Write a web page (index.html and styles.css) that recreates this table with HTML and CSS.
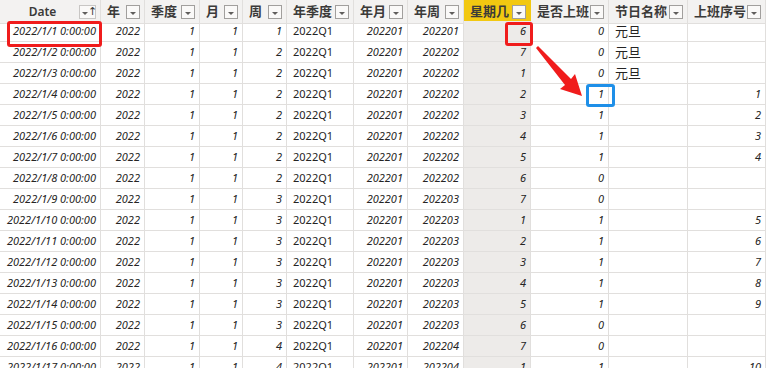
FILE: index.html
```html
<!DOCTYPE html>
<html lang="zh">
<head>
<meta charset="utf-8">
<link rel="stylesheet" href="styles.css">
</head>
<body>
<div class="view">
  <div class="grid" id="grid">
    <div class="hc hc-center"><span class="ht">Date</span><span class="btn sort"><span class="tri"></span><span class="up">↑</span></span></div>
    <div class="hc"><span class="ht">年</span><span class="btn"><span class="tri"></span></span></div>
    <div class="hc"><span class="ht">季度</span><span class="btn"><span class="tri"></span></span></div>
    <div class="hc"><span class="ht">月</span><span class="btn"><span class="tri"></span></span></div>
    <div class="hc"><span class="ht">周</span><span class="btn"><span class="tri"></span></span></div>
    <div class="hc"><span class="ht">年季度</span><span class="btn"><span class="tri"></span></span></div>
    <div class="hc"><span class="ht">年月</span><span class="btn"><span class="tri"></span></span></div>
    <div class="hc"><span class="ht">年周</span><span class="btn"><span class="tri"></span></span></div>
    <div class="hc hc-sel"><span class="ht">星期几</span><span class="btn"><span class="tri"></span></span></div>
    <div class="hc"><span class="ht">是否上班</span><span class="btn"><span class="tri"></span></span></div>
    <div class="hc"><span class="ht">节日名称</span><span class="btn"><span class="tri"></span></span></div>
    <div class="hc"><span class="ht">上班序号</span><span class="btn"><span class="tri"></span></span></div>
  </div>
  <div class="marks">
    <div class="box red-a"></div>
    <div class="box red-b"></div>
    <div class="box blue"></div>
    <svg class="arrow" width="70" height="60" viewBox="0 0 70 60">
      <polygon points="2,3 4,1 37,34 41,29 48,51 26,44 31,40" fill="#f01c1c"/>
    </svg>
  </div>
</div>
<script>
(function(){
  var rows = [
    [1,1,1,1,'202201','202201',6,0,'元旦',''],
    [2,1,1,2,'202201','202202',7,0,'元旦',''],
    [3,1,1,2,'202201','202202',1,0,'元旦',''],
    [4,1,1,2,'202201','202202',2,1,'',1],
    [5,1,1,2,'202201','202202',3,1,'',2],
    [6,1,1,2,'202201','202202',4,1,'',3],
    [7,1,1,2,'202201','202202',5,1,'',4],
    [8,1,1,2,'202201','202202',6,0,'',''],
    [9,1,1,3,'202201','202203',7,0,'',''],
    [10,1,1,3,'202201','202203',1,1,'',5],
    [11,1,1,3,'202201','202203',2,1,'',6],
    [12,1,1,3,'202201','202203',3,1,'',7],
    [13,1,1,3,'202201','202203',4,1,'',8],
    [14,1,1,3,'202201','202203',5,1,'',9],
    [15,1,1,3,'202201','202203',6,0,'',''],
    [16,1,1,4,'202201','202204',7,0,'',''],
    [17,1,1,4,'202201','202204',1,1,'',10]
  ];
  var g = document.getElementById('grid');
  var html = '';
  rows.forEach(function(r){
    html += '<div class="c num">2022/1/' + r[0] + ' 0:00:00</div>';
    html += '<div class="c num">2022</div>';
    html += '<div class="c num">' + r[1] + '</div>';
    html += '<div class="c num">' + r[2] + '</div>';
    html += '<div class="c num">' + r[3] + '</div>';
    html += '<div class="c txt">2022Q1</div>';
    html += '<div class="c num">' + r[4] + '</div>';
    html += '<div class="c num">' + r[5] + '</div>';
    html += '<div class="c num sel">' + r[6] + '</div>';
    html += '<div class="c num">' + r[7] + '</div>';
    html += '<div class="c txt cjk">' + r[8] + '</div>';
    html += '<div class="c num">' + r[9] + '</div>';
  });
  g.insertAdjacentHTML('beforeend', html);
})();
</script>
</body>
</html>
```

FILE: styles.css
```css
html, body {
  margin: 0;
  padding: 0;
  background: #ffffff;
}
body {
  font-family: "Noto Sans", "Noto Sans CJK SC", sans-serif;
  color: #252423;
}
.view {
  position: relative;
  width: 775px;
  height: 368px;
  overflow: hidden;
}
.grid {
  display: grid;
  grid-template-columns: 101px 44px 55px 43px 44px 67px 54px 56px 67px 78px 79px 78px;
  grid-auto-rows: 21px;
  width: 766px;
}
.hc {
  box-sizing: border-box;
  height: 24px;
  background: #f3f2f1;
  border-right: 1px solid #e1dfdd;
  border-bottom: 1px solid #e1dfdd;
  display: flex;
  align-items: center;
  padding: 0 4px 0 6px;
  font-family: "Noto Sans", "Noto Sans CJK SC", sans-serif;
  font-weight: 600;
  font-size: 13px;
  color: #3b3a39;
}
.hc-center .ht {
  flex: 1;
  text-align: center;
  font-size: 12px;
}
.hc-sel {
  background: #f2c811;
  border-right-color: #f2c811;
}
.ht {
  flex: 1;
  white-space: nowrap;
  overflow: hidden;
  line-height: 23px;
}
.btn {
  box-sizing: border-box;
  flex: none;
  width: 14px;
  height: 14px;
  border: 1px solid #a19f9d;
  background: #faf9f8;
  display: flex;
  align-items: center;
  justify-content: center;
  margin-top: 1px;
}
.btn.sort {
  width: 17px;
  border-color: #c8c6c4;
  justify-content: flex-start;
  padding-left: 2px;
  gap: 0;
}
.tri {
  width: 0;
  height: 0;
  border-left: 3px solid transparent;
  border-right: 3px solid transparent;
  border-top: 3px solid #605e5c;
  margin-top: 2px;
}
.up {
  font-size: 11px;
  font-weight: 400;
  line-height: 12px;
  color: #3b3a39;
  font-family: "DejaVu Sans", sans-serif;
  margin-left: 0;
}
.c {
  box-sizing: border-box;
  height: 21px;
  border-right: 1px solid #e1dfdd;
  border-bottom: 1px solid #e1dfdd;
  font-size: 11px;
  line-height: 20px;
  white-space: nowrap;
  overflow: hidden;
}
.num {
  text-align: right;
  font-style: italic;
  padding-right: 4px;
}
.txt {
  padding-left: 6px;
}
.cjk {
  font-size: 13px;
}
.sel {
  background: #edebe9;
}
.marks .box {
  position: absolute;
  box-sizing: border-box;
  border: 3px solid #f01c1c;
  border-radius: 3px;
}
.red-a {
  left: 7px;
  top: 21px;
  width: 95px;
  height: 26px;
}
.red-b {
  left: 505px;
  top: 22px;
  width: 28px;
  height: 24px;
}
.blue {
  left: 586px;
  top: 84px;
  width: 29px;
  height: 23px;
  border-color: #1e8fe8 !important;
}
.arrow {
  position: absolute;
  left: 534px;
  top: 45px;
}
```
